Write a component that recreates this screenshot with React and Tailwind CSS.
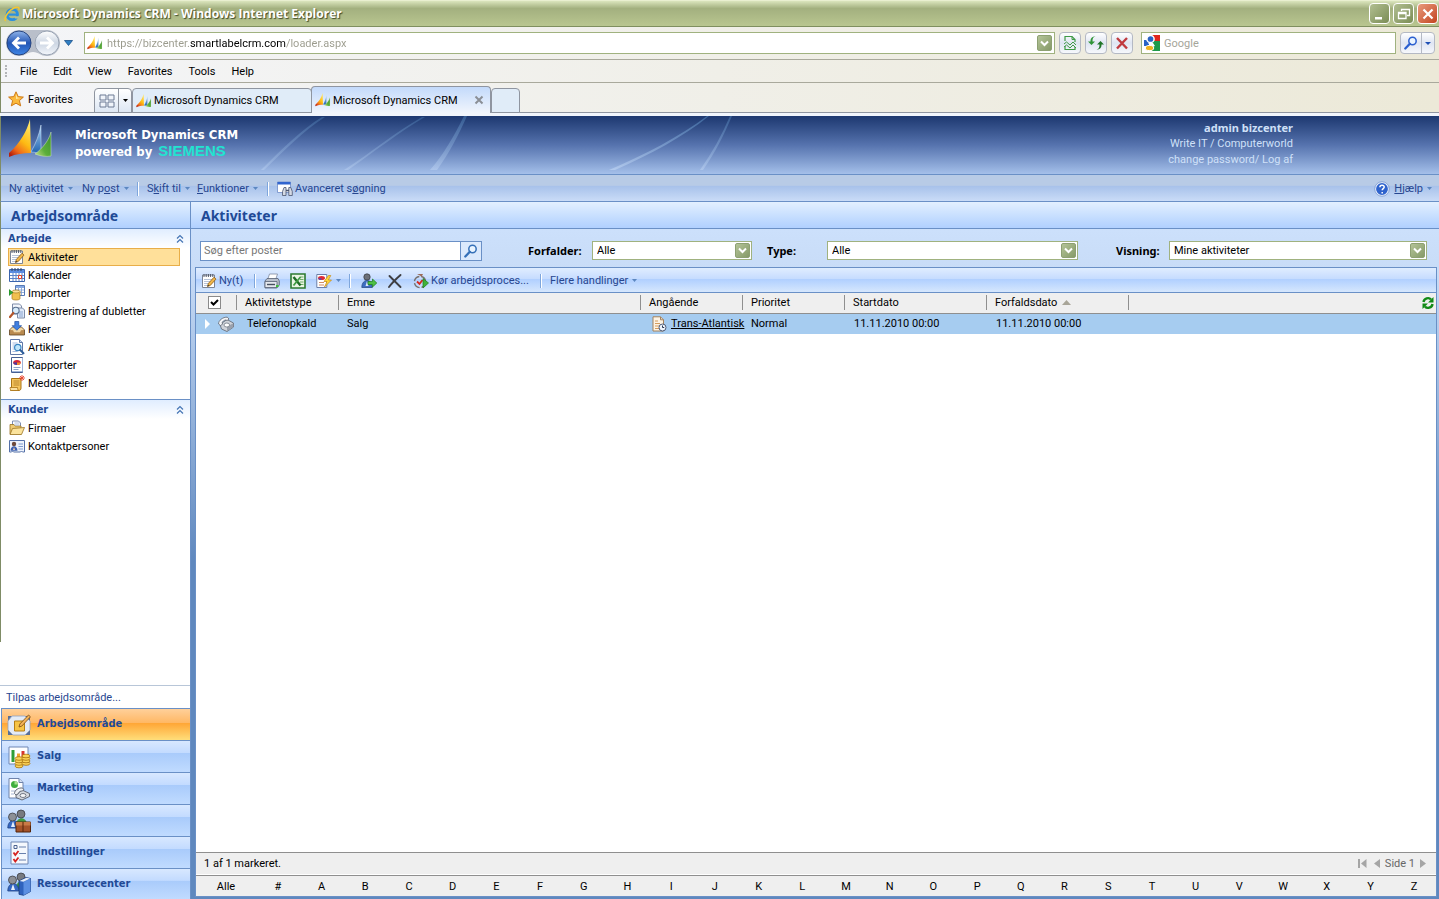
import React, { useState } from 'react';

/* ---------- icons ---------- */

const Svg = ({ size = 'w-4 h-4', box = '0 0 16 16', children }) => (
  <svg className={`${size} shrink-0`} viewBox={box} fill="none" aria-hidden="true">
    {children}
  </svg>
);

const CrmLogo = ({ size }) => (
  <Svg size={size} box="0 0 46 40">
    <defs>
      <linearGradient id="sailYellow" x1="0.7" y1="0" x2="0.2" y2="1">
        <stop offset="0" stopColor="#ffe76a" />
        <stop offset="0.5" stopColor="#fdbb13" />
        <stop offset="0.8" stopColor="#f0691b" />
        <stop offset="1" stopColor="#b5200f" />
      </linearGradient>
      <linearGradient id="sailBlue" x1="0" y1="0" x2="0" y2="1">
        <stop offset="0" stopColor="#a9d2f5" />
        <stop offset="1" stopColor="#1b5fae" />
      </linearGradient>
      <linearGradient id="sailGreen" x1="1" y1="0" x2="0" y2="1">
        <stop offset="0" stopColor="#3d8f2c" />
        <stop offset="0.6" stopColor="#5cae3b" />
        <stop offset="1" stopColor="#c9e08a" />
      </linearGradient>
    </defs>
    <path d="M22 0C19 12 12 24 1 34v4c7-3 14-4 22-4z" fill="url(#sailYellow)" />
    <path d="M33 6c-2 10-5 18-10 27 4 0 7 1 10 2z" fill="url(#sailBlue)" stroke="#d5e8fa" strokeWidth=".5" />
    <path d="M43 13c-2 8-8 16-16 22 5 2 11 3 16 2z" fill="url(#sailGreen)" stroke="#cfe6bd" strokeWidth=".5" />
  </Svg>
);

const IeIcon = () => (
  <Svg>
    <circle cx="8.3" cy="8.5" r="5.2" stroke="#2a8fe0" strokeWidth="2.8" />
    <path d="M4 8.6h10" stroke="#2a8fe0" strokeWidth="2.2" />
    <path d="M10 10.2h5v2.3h-4z" fill="#b3c08c" />
    <path d="M1.6 15C-.6 12.500 4.500 4 11 1.500c3-1 4.600 0 3.800 2.300" stroke="#f6c62c" strokeWidth="1.4" />
  </Svg>
);

const StarIcon = () => (
  <Svg>
    <path d="m8 .8 2.200 4.800 5.200.5-4 3.500 1.300 5.300L8 12.200l-4.700 2.700 1.300-5.300-4-3.500 5.200-.5z" fill="#fbb93c" stroke="#c9720e" strokeWidth=".9" />
    <path d="m8 3 1.400 3.500 3 .4L8 8z" fill="#ffe6a0" />
  </Svg>
);

const NotepadIcon = () => (
  <Svg>
    <path d="M1.500 2h12v12.500h-12z" fill="#fff" stroke="#7b8496" />
    <path d="M3 1v3M5.200 1v3M7.400 1v3M9.600 1v3M11.800 1v3" stroke="#50586a" />
    <path d="M3 6.500h9M3 8.500h9M3 10.500h7M3 12.500h5" stroke="#b7c3d9" />
    <path d="m6.500 13.500.8-3L13 4.200l2 1.900-5.700 6.300z" fill="#f0b649" stroke="#8c5a16" strokeWidth=".8" />
    <path d="m6.500 13.500.5-1.700 1.200 1z" fill="#333" />
  </Svg>
);

const CalendarIcon = () => (
  <Svg>
    <path d="M.5 2.500h15v12H.5z" fill="#fff" stroke="#3a64ad" />
    <path d="M1 3h14v3H1z" fill="#5b8ce0" />
    <path d="M3 1v3M6 1v3M9 1v3M12 1v3" stroke="#36425c" />
    <path d="M1 8.500h14M1 11.500h14M4 6v8M7 6v8M10 6v8M13 6v8" stroke="#5d83c7" />
    <path d="M9.500 8.500h3v3h-3z" fill="#fff" stroke="#e0442a" />
  </Svg>
);

const ImportIcon = () => (
  <Svg>
    <path d="M6.500.5h9v10h-9z" fill="#fff" stroke="#5679b5" />
    <path d="M7 1h8v2H7z" fill="#86a9e4" />
    <path d="M7 5h8M7 7.500h8M9.500 3v7M12.500 3v7" stroke="#7c9cd2" strokeWidth=".8" />
    <path d="M3 6.500v7c0 2 8 2 8 0v-7z" fill="#f1c04f" stroke="#a8781c" strokeWidth=".7" />
    <ellipse cx="7" cy="6.500" rx="4" ry="1.500" fill="#fbe29a" stroke="#a8781c" strokeWidth=".7" />
    <path d="M0 4.500 4 7.500 0 10.500z" fill="#2fa832" stroke="#14751a" strokeWidth=".5" />
  </Svg>
);

const DuplicateIcon = () => (
  <Svg>
    <path d="M3.500 1h7l2 2v8h-9z" fill="#f3f6fc" stroke="#7f8ca8" />
    <path d="M8.500 5h5l2 2v8h-7z" fill="#dfe9f8" stroke="#7f8ca8" />
    <path d="M10 9h4M10 11h4M10 13h4" stroke="#8aa4d0" />
    <circle cx="6.800" cy="7.500" r="3.300" fill="#d8ecfb" stroke="#59708f" strokeWidth="1.100" />
    <path d="M4.300 10 1 14" stroke="#b5562b" strokeWidth="2.200" strokeLinecap="round" />
  </Svg>
);

const QueueIcon = () => (
  <Svg>
    <path d="m.5 9 3-3h9l3 3v5h-15z" fill="#b98a4f" stroke="#5f4422" strokeWidth=".8" />
    <path d="m1 9 2.500-2.500h9L15 9l-3 .3-1 2H5l-1-2z" fill="#f0d7a4" />
    <path d="M5.800.5h4v4.200h2.700L7.800 9.300 3.200 4.700h2.600z" fill="#3f7fe0" stroke="#1c4da0" strokeWidth=".7" />
  </Svg>
);

const ArticleIcon = () => (
  <Svg>
    <path d="M1.500.5h9l3 3v12h-12z" fill="#fff" stroke="#6079a8" />
    <path d="M10.500.5v3h3" fill="#c8d8f1" stroke="#6079a8" />
    <path d="M3.500 4h5M3.500 6h3M3.500 8h2M3.500 10h2M3.500 12.500h5" stroke="#a7bbe0" />
    <circle cx="8.800" cy="8.500" r="3.200" fill="#bfe5fa" stroke="#3b86c4" strokeWidth="1.200" />
    <path d="m11.200 11 3.300 3.300" stroke="#2f5f9c" strokeWidth="2" strokeLinecap="round" />
  </Svg>
);

const ReportIcon = () => (
  <Svg>
    <path d="M2.500.5h11v15h-11z" fill="#fff" stroke="#465f93" />
    <path d="M3 14.500h10.500V1" stroke="#9fb3d8" />
    <ellipse cx="8" cy="5.500" rx="3.800" ry="2.500" fill="#d6233b" />
    <path d="M8 5.500 4.200 5.500C4.300 7 6 8 8 8z" fill="#4d3aa0" />
    <path d="M8 5.500h3.800C11.600 7 10 8 8 8z" fill="#f08f2c" />
    <path d="M4.500 10.500h7M4.500 12.500h5" stroke="#8ea2c8" />
  </Svg>
);

const MessageIcon = () => (
  <Svg>
    <path d="M2.500 3.500h9.500v9.500c0 1.500-.8 2.500-2 2.500H1.500c.8-.6 1-1.500 1-2.500z" fill="#f5c45c" stroke="#aa7415" />
    <path d="M1 12.500h7.500c0 2 .6 2.600 1.500 3H2.500C1.500 15 1 14 1 12.500z" fill="#fbe0a0" stroke="#aa7415" strokeWidth=".8" />
    <path d="M4.500 6h6M4.500 8h6M4.500 10h6" stroke="#b9862c" />
    <path d="M13 0v6M10 3h6M11 1l4 4M15 1l-4 4" stroke="#e8452f" strokeWidth=".9" />
  </Svg>
);

const FolderIcon = () => (
  <Svg>
    <path d="M3.500 1h6l2 2v8h-8z" fill="#fff" stroke="#7c8eb2" />
    <path d="M1 4.500h4l1 1.500h6v8H1z" fill="#f0cb73" stroke="#9a7423" strokeWidth=".8" />
    <path d="M5.500 3h5M5.500 5h5" stroke="#a9badb" />
    <path d="m3.500 8.500 12-1-3 7H1z" fill="#fbe39c" stroke="#9a7423" strokeWidth=".8" />
  </Svg>
);

const ContactIcon = () => (
  <Svg>
    <path d="M.5 2.500h15v11.500h-2l-1-1-1 1h-7l-1-1-1 1h-2z" fill="#eef3fc" stroke="#5470a8" />
    <circle cx="5" cy="6" r="2.200" fill="#6d4a3b" />
    <path d="M1.500 12.800c0-6 7-6 7 0z" fill="#3b5fae" />
    <path d="m5 9-1 3h2z" fill="#f3d0b0" />
    <path d="M9.500 6h4.500M9.500 8.500h4.500M9.500 11h4.500" stroke="#7f9bd0" />
  </Svg>
);

const PhoneIcon = () => (
  <Svg>
    <path d="m2 8.500 7-5 6.500 3.500v4L9 15.500 3.500 13z" fill="#cfd3da" stroke="#5d636e" strokeWidth=".8" />
    <path d="m9 10.500 6.300-3.300v3.700L9 15.300z" fill="#9aa1ad" />
    <ellipse cx="8.800" cy="9" rx="2.800" ry="2" fill="#fff" stroke="#6f7682" strokeWidth=".8" />
    <path d="M.6 8C.3 4.500 5 .9 9.300 1.200l1.700 1.800-1.800 1.400-1.800-.4C5.800 4.400 4.500 5.500 4.200 6.700l.4 1.500-2.200 1.300z" fill="#f4f5f8" stroke="#5d636e" strokeWidth=".8" />
  </Svg>
);

const CaseIcon = () => (
  <Svg>
    <path d="M2 .8h7.500l3 3V15H2z" fill="#fdf3e4" stroke="#a3825d" />
    <path d="M9.500.8v3h3" stroke="#a3825d" />
    <path d="M4 5h3M4 7.500h5M4 10h4M4 12.500h4" stroke="#d49b5c" />
    <circle cx="11.500" cy="11.500" r="3.500" fill="#eef4fc" stroke="#4f5c78" />
    <path d="M11.500 9.500v2h1.700" stroke="#26344f" />
  </Svg>
);

const PrintIcon = () => (
  <Svg>
    <path d="M5.500 1h8l-2 6h-8z" fill="#fff" stroke="#7d89a0" strokeWidth=".8" />
    <path d="m1 8 2-2.500h11L15.300 8v4l-2.500 3H1z" fill="#b9c0cc" stroke="#555f73" strokeWidth=".8" />
    <path d="M1 8.500h12v6H1z" fill="#e4e8ee" stroke="#555f73" strokeWidth=".8" />
    <path d="M3 11.500h8" stroke="#464f60" strokeWidth="1.400" />
    <path d="M12 12h2.500v2H12z" fill="#3fbf3a" />
  </Svg>
);

const ExcelIcon = () => (
  <Svg>
    <path d="M1 1h14v14H1z" fill="#e9f4e4" stroke="#2c7a31" strokeWidth="1.600" />
    <path d="M10 4h3.500M10 6.500h3.500M10 9h3.500M10 11.500h3.500" stroke="#6fae6a" />
    <path d="m3.500 4 7 8.500" stroke="#1e6b25" strokeWidth="2.400" />
    <path d="m10.500 4-7 8.500" stroke="#3f9a42" strokeWidth="1.800" />
  </Svg>
);

const RunReportIcon = () => (
  <Svg>
    <path d="M.8 1.500h10v13H.8z" fill="#fff" stroke="#6b7fa9" />
    <ellipse cx="5.500" cy="5" rx="3.500" ry="2" fill="#e02b35" />
    <path d="M2 5.200c.3 1.500 2 2 3.500 1.900V5z" fill="#6646a5" />
    <path d="M3 9.500h5M3 12h5" stroke="#d18c64" />
    <path d="M12.500 2.500 8 8.500h3L8.500 14 15.500 7h-3.200l2.500-4.500z" fill="#ffd83b" stroke="#c98a12" strokeWidth=".7" />
  </Svg>
);

const AssignIcon = () => (
  <Svg>
    <circle cx="6" cy="4" r="3.200" fill="#6c7078" stroke="#33363c" strokeWidth=".7" />
    <path d="M.8 14.500c0-9.500 10.500-9.500 10.500 0z" fill="#3d6dc0" stroke="#24427d" strokeWidth=".7" />
    <path d="m6 8-1.500 5h3z" fill="#dbe6f7" />
    <path d="M7 8.500h4.500V6l4.300 4-4.300 4v-2.500H7z" fill="#4dc144" stroke="#1d7d1b" strokeWidth=".7" />
  </Svg>
);

const DeleteIcon = () => (
  <Svg>
    <path d="m2.500 3 11 11M13.500 2C9 6 5 10 2 14" stroke="#3e3e42" strokeWidth="1.900" strokeLinecap="round" />
  </Svg>
);

const WorkflowIcon = () => (
  <Svg>
    <circle cx="7" cy="9" r="5.600" stroke="#77706d" strokeWidth="1.400" strokeDasharray="7 2" />
    <path d="M4 1h6L8.500 4 7 2.500z" fill="#9b6b58" />
    <path d="m4 8.500 2.500 2.500L9.500 7" stroke="#d8281f" strokeWidth="1.800" />
    <path d="M10 5.500 15.500 10 10 15z" fill="#40b23a" stroke="#1c7a1b" strokeWidth=".7" />
  </Svg>
);

const FindIcon = () => (
  <Svg>
    <path d="M.5 1h13v10.500H.5z" fill="#fff" stroke="#6f8cc8" strokeWidth=".8" />
    <path d="M.5 1h13v2.500H.5z" fill="#3165cf" />
    <path d="M5.500 14.500v-4l1.500-4h2v8zM15.300 14.500v-4l-1.500-4h-2v8z" fill="#d5dae4" stroke="#4b5670" strokeWidth=".8" />
    <path d="M9 9.500h3" stroke="#4b5670" strokeWidth="1.500" />
  </Svg>
);

const HelpIcon = () => (
  <Svg>
    <circle cx="8" cy="8" r="6.500" fill="#2f63cd" stroke="#e8effb" strokeWidth="1.200" />
    <circle cx="8" cy="8" r="7.300" stroke="#6f8fc9" strokeWidth=".6" />
    <path d="M5.900 6.300c0-2.800 4.300-2.700 4.300-.2 0 1.500-2 1.600-2 3.200M8.200 11v1.500" stroke="#fff" strokeWidth="1.500" />
  </Svg>
);

const Magnifier = ({ color }) => (
  <Svg size="w-3.5 h-3.5" box="0 0 14 14">
    <circle cx="8.500" cy="5" r="3.700" fill="#e9f4ff" stroke={color} strokeWidth="1.500" />
    <path d="m5.800 7.800-4.500 4.700" stroke={color} strokeWidth="2.300" strokeLinecap="round" />
  </Svg>
);

const WorkplaceNavIcon = () => (
  <Svg size="w-6 h-6" box="0 0 24 24">
    <path d="M1 3h22v19H1z" fill="#5a6f96" />
    <path d="M5 3h13l5 5v9l-5 5H6l-5-5V8z" fill="#e4ebf6" stroke="#8fa1c2" strokeWidth=".8" />
    <path d="M7.500 8h10v10h-10z" fill="#f7c445" stroke="#b67f14" />
    <path d="m12 14 .8-3L21.500 2l2 1.800-8.700 9.300z" fill="#f3b357" stroke="#7a4a14" strokeWidth=".8" />
  </Svg>
);

const SalesNavIcon = () => (
  <Svg size="w-6 h-6" box="0 0 24 24">
    <path d="M2 2h19v17H2z" fill="#fff" stroke="#6f87b4" />
    <path d="M4.500 5h3v12h-3z" fill="#2f9e37" />
    <path d="M10 8.500h3V17h-3z" fill="#f1a52e" />
    <path d="M14.500 6h3v11h-3z" fill="#d8362f" />
    {[21, 18.5, 16, 13.5].map((y) => (
      <ellipse key={y} cx="12" cy={y} rx="4" ry="1.800" fill="#fbd45a" stroke="#a8720d" strokeWidth=".8" />
    ))}
    {[18.5, 16, 13.5, 11].map((y) => (
      <ellipse key={y} cx="19" cy={y} rx="4" ry="1.800" fill="#fbd45a" stroke="#a8720d" strokeWidth=".8" />
    ))}
  </Svg>
);

const MarketingNavIcon = () => (
  <Svg size="w-6 h-6" box="0 0 24 24">
    <path d="M2 1.500h10l4 4V21H2z" fill="#fff" stroke="#6f83ab" />
    <path d="M12 1.500v4h4" fill="#d5e0f2" stroke="#6f83ab" />
    <circle cx="7.500" cy="7.500" r="3.500" fill="#3fae3c" />
    <path d="M7.500 7.500V4A3.500 3.500 0 0 1 11 7.500z" fill="#a6de8f" />
    <path d="M4 14h4M4 17h3" stroke="#a8b7d3" />
    <path d="m9 18 6-5 7.500 3.500v3L15 23l-6-2.500z" fill="#d3d7de" stroke="#59606d" strokeWidth=".9" />
    <ellipse cx="16" cy="18.500" rx="3" ry="2" fill="#f5f6f8" stroke="#59606d" strokeWidth=".8" />
    <path d="M7.500 16.500c0-3.500 4-6 8-5.500l1.500 1.800-1.800 1.200c-2 0-3.500.8-4.200 3l-2 1z" fill="#eef0f3" stroke="#59606d" strokeWidth=".9" />
  </Svg>
);

const People = () => (
  <>
    <path d="M9 16c0-9 11-9 11 0z" fill="#3f9a44" />
    <circle cx="14" cy="5" r="4" fill="#777a80" stroke="#3d3f45" strokeWidth=".8" />
    <path d="M.8 19c0-10 11-10 11 0z" fill="#3568c4" stroke="#1e4080" strokeWidth=".8" />
    <path d="m6 12-2 6h4z" fill="#e6eefb" />
    <circle cx="5.500" cy="8" r="4" fill="#8d9096" stroke="#3d3f45" strokeWidth=".8" />
  </>
);

const ServiceNavIcon = () => (
  <Svg size="w-6 h-6" box="0 0 24 24">
    <People />
    <path d="M9 13h14.500v10H9z" fill="#a4532a" stroke="#552409" />
    <path d="M9 13h14.500v3.500H9z" fill="#c97b46" />
    <path d="M16 13v10" stroke="#552409" />
  </Svg>
);

const SettingsNavIcon = () => (
  <Svg size="w-6 h-6" box="0 0 24 24">
    <path d="M4 1h17v22H4z" fill="#f5f8fd" stroke="#7187b3" />
    <path d="M7 4.500h3v3H7z" stroke="#4d6391" />
    <path d="M12 6h7M12 12.500h7M12 19h7" stroke="#6980ad" strokeWidth="1.200" />
    <path d="m6.500 11.500 1.800 2.500 3.200-4M6.500 18l1.800 2.500 3.200-4" stroke="#d4211f" strokeWidth="1.800" />
  </Svg>
);

const ResourceNavIcon = () => (
  <Svg size="w-6 h-6" box="0 0 24 24">
    <People />
    <path d="m12 9 7-3.500 4.500 1v13l-7 3.800-4.500-1z" fill="#2f62bd" stroke="#173a7c" strokeWidth=".8" />
    <path d="m16.500 10 7-3.500v13l-7 3.800z" fill="#5b8fe2" />
    <path d="m12.500 9 7-3.200 3.600.8-6.600 3.200z" fill="#e5edfa" />
  </Svg>
);

/* ---------- small shared parts ---------- */

const Caret = () => (
  <svg className="w-[5px] h-[3px] shrink-0 ml-1" viewBox="0 0 5 3" aria-hidden="true">
    <path d="M0 0h5L2.500 3z" fill="#5c87c0" />
  </svg>
);

const Divider = () => <span className="w-[2px] h-3.5 bg-[#7ea6dc] border-r border-white" />;

const Collapse = () => (
  <svg className="w-2 h-2.5" viewBox="0 0 8 10" fill="none" aria-hidden="true">
    <path d="M1 4.500 4 1.500l3 3M1 8.500 4 5.500l3 3" stroke="#4474b4" strokeWidth="1.200" />
  </svg>
);

const GreenArrow = () => (
  <span className="absolute right-[2px] top-[2px] bottom-[2px] w-[15px] rounded-xs bg-linear-to-br from-[#b4c498] to-[#869a68] border border-[#8da072] flex items-center justify-center pointer-events-none">
    <svg className="w-[9px] h-[7px]" viewBox="0 0 9 7" fill="none" aria-hidden="true">
      <path d="m1 1.500 3.500 3.500L8 1.500" stroke="#fff" strokeWidth="2" />
    </svg>
  </span>
);

const FilterSelect = ({ id, label, labelClass, selectClass, option }) => (
  <>
    <label htmlFor={id} className={`font-bold leading-4 [font-family:'Noto_Sans',sans-serif] ${labelClass}`}>{label}</label>
    <div className={`relative ${selectClass}`}>
      <select id={id} className="block appearance-none w-full h-[19px] pl-1 bg-white border border-[#a0b27f] leading-[17px] outline-none">
        <option>{option}</option>
      </select>
      <GreenArrow />
    </div>
  </>
);

const ToolButton = ({ icon, children, caret, className = '', ...rest }) => (
  <button className={`flex items-center whitespace-nowrap ${className}`} {...rest}>
    {icon}
    {children && <span className={icon ? 'ml-[2px]' : ''}>{children}</span>}
    {caret && <Caret />}
  </button>
);

/* ---------- browser chrome ---------- */

const TitleBar = () => (
  <div className="h-[27px] flex items-center pl-1 pr-px bg-linear-to-b from-[#dbe5bd] via-[#a3b07f] via-30% to-[#b9c690] border-t border-[#e9efd0] border-b border-b-[#7f8f5f]">
    <IeIcon />
    <h1 className="ml-[2px] text-white text-[12px] font-bold [text-shadow:1px_1px_1px_#3f4a28] [font-family:'Open_Sans',sans-serif]">
      Microsoft Dynamics CRM - Windows Internet Explorer
    </h1>
    <div className="ml-auto flex gap-[3px]">
      <button aria-label="Minimize" className="w-[21px] h-[21px] rounded-sm border border-white bg-linear-to-br from-[#b2bf92] to-[#7b8d55] flex items-center justify-center">
        <Svg><path d="M3 11h7v2.500H3z" fill="#fff" /></Svg>
      </button>
      <button aria-label="Restore" className="w-[21px] h-[21px] rounded-sm border border-white bg-linear-to-br from-[#b2bf92] to-[#7b8d55] flex items-center justify-center">
        <Svg><path d="M5.500 5V3.500h8v6H11M2.500 6.500h7.500v6H2.500zM2.500 7.500H10" stroke="#fff" strokeWidth="1.300" /></Svg>
      </button>
      <button aria-label="Close" className="w-[21px] h-[21px] rounded-sm border border-white bg-linear-to-br from-[#e79a7c] to-[#c2421b] flex items-center justify-center">
        <Svg><path d="m3.500 3.500 9 9M12.500 3.500l-9 9" stroke="#fff" strokeWidth="2.200" /></Svg>
      </button>
    </div>
  </div>
);

const chromeButton =
  'w-[22px] h-[22px] rounded-sm border border-[#b4b9c4] bg-linear-to-b from-white via-[#dfe5f2] to-[#f6f8fc] flex items-center justify-center';

const AddressRow = () => (
  <div className="h-8 flex items-center pl-1 pr-1">
    <svg className="w-[58px] h-7 shrink-0" viewBox="0 0 58 28" aria-hidden="true">
      <defs>
        <linearGradient id="back" x1="0" y1="0" x2="0" y2="1">
          <stop offset="0" stopColor="#8fb4ea" />
          <stop offset="0.5" stopColor="#2456b4" />
          <stop offset="1" stopColor="#3f86e6" />
        </linearGradient>
        <linearGradient id="fwd" x1="0" y1="0" x2="0" y2="1">
          <stop offset="0" stopColor="#fff" />
          <stop offset="0.5" stopColor="#cdd6e3" />
          <stop offset="1" stopColor="#f3f6fb" />
        </linearGradient>
      </defs>
      <path d="M14 1h28a13 13 0 0 1 0 26c-7 0-8-4-14-4s-7 4-14 4a13 13 0 0 1 0-26z" fill="#b9bfca" />
      <circle cx="14" cy="14" r="12" fill="url(#back)" stroke="#27457f" />
      <circle cx="42" cy="14" r="12" fill="url(#fwd)" stroke="#9aa4b4" />
      <path d="M21 14H9M14 8.500 8.500 14l5.500 5.500" fill="none" stroke="#fff" strokeWidth="2.800" />
      <path d="M35 14h12M42 8.500l5.500 5.500-5.500 5.500" fill="none" stroke="#fff" strokeWidth="2.800" />
    </svg>
    <svg className="w-[9px] h-[6px] mx-px shrink-0" viewBox="0 0 9 6" aria-hidden="true">
      <path d="M.5.5h8L4.500 5.500z" fill="#2f7fc4" stroke="#174f8c" strokeWidth=".8" />
    </svg>
    <div className="relative flex-1 ml-2.5 h-[22px] flex items-center bg-white border border-[#a0b27f] pl-[2px] pr-5">
      <CrmLogo size="w-4 h-3.5" />
      <input
        aria-label="Address"
        defaultValue="https://bizcenter.smartlabelcrm.com/loader.aspx"
        className="flex-1 ml-1 outline-none text-transparent bg-clip-text bg-[linear-gradient(90deg,#9a9a8c_83px,#000_83px,#000_179px,#9a9a8c_179px)]"
      />
      <GreenArrow />
    </div>
    <div className="flex gap-1 ml-1">
      <button aria-label="Compatibility view" className={chromeButton}>
        <Svg>
          <path d="M3 6V1.500h7l3 3V7M3 11v3.500h10V12" stroke="#3f9a46" strokeWidth="1.200" />
          <path d="M10 1.500v3h3" stroke="#3f9a46" />
          <path d="m2 9 2.500-2L8 10l3-3 3 3M2 12l2.500-2L8 13l3-3 3 3" stroke="#3f9a46" />
        </Svg>
      </button>
      <button aria-label="Refresh" className={chromeButton}>
        <Svg>
          <path d="M7.500 1.500C5 2 4.500 3.500 4.500 6.500H7L3.500 10 0 6.500h2.500C2.500 3 4 1.500 7.500 1.500z" fill="#2f9437" />
          <path d="M8.500 14.500c2.500-.5 3-2 3-5H9L12.500 6 16 9.500h-2.500c0 3.500-1.500 5-5 5z" fill="#1f7527" />
        </Svg>
      </button>
      <button aria-label="Stop" className={chromeButton}>
        <Svg><path d="m3 3 10 10.500M13 3 3 13.500" stroke="#c03a3f" strokeWidth="2.400" /></Svg>
      </button>
    </div>
    <div className="w-[255px] ml-2 h-[22px] flex items-center bg-white border border-[#a0b27f] pl-[2px]">
      <Svg>
        <path d="M8 0h8v8H8z" fill="#e1261c" />
        <path d="M8 6h8v10H8z" fill="#1f9a4a" />
        <path d="M0 5h5v6H0z" fill="#2a62c4" />
        <circle cx="6.500" cy="4" r="3.600" fill="#2a62c4" stroke="#fff" strokeWidth="1.500" />
        <path d="M4 8h5l2 3-3 1z" fill="#fff" />
        <ellipse cx="5.500" cy="13" rx="4.200" ry="2.600" fill="#f3b31f" stroke="#fff" />
      </Svg>
      <input aria-label="Search Google" placeholder="Google" className="flex-1 ml-1 outline-none placeholder:text-[#a5a59a]" />
    </div>
    <div className="flex ml-1 rounded-sm border border-[#b4b9c4] bg-linear-to-b from-white via-[#dfe5f2] to-[#f6f8fc]">
      <button aria-label="Search" className="w-5 h-5 flex items-center justify-center"><Magnifier color="#2a5fd0" /></button>
      <button aria-label="Search options" className="w-[13px] h-5 border-l border-[#b4b9c4] flex items-center justify-center">
        <svg className="w-[6px] h-[3px]" viewBox="0 0 6 3" aria-hidden="true"><path d="M0 0h6L3 3z" fill="#1d4fb5" /></svg>
      </button>
    </div>
  </div>
);

const MenuRow = () => (
  <nav className="h-6 flex items-center gap-4 pl-1 border-t border-[#a9a99c] border-b border-b-[#a9a99c]">
    <span className="-mr-[3px] h-3 border-l-2 border-dotted border-[#b3b5b8]" />
    <a href="#file">File</a>
    <a href="#edit">Edit</a>
    <a href="#view">View</a>
    <a href="#favorites">Favorites</a>
    <a href="#tools">Tools</a>
    <a href="#help">Help</a>
  </nav>
);

const TabRow = () => (
  <div className="h-[30px] flex items-end bg-[linear-gradient(#8f95a0,#8f95a0)] bg-[length:100%_1px] bg-bottom bg-no-repeat">
    <button className="flex items-center gap-1 pl-[7px] h-[28px] w-[93px]">
      <StarIcon />
      Favorites
    </button>
    <div className="flex h-[25px] w-[38px] rounded-t-sm border border-[#8f95a0] bg-linear-to-b from-white to-[#dde7f4]">
      <button aria-label="Quick tabs" className="flex-1 flex items-center justify-center border-r border-[#8f95a0]">
        <Svg><path d="M1 2h6v5H1zM9 2h6v5H9zM1 9h6v5H1zM9 9h6v5H9z" stroke="#6d7a94" fill="#f0f4fa" /></Svg>
      </button>
      <button aria-label="Tab list" className="w-3 flex items-center justify-center">
        <svg className="w-[5px] h-[3px]" viewBox="0 0 5 3" aria-hidden="true"><path d="M0 0h5L2.500 3z" fill="#000" /></svg>
      </button>
    </div>
    <button className="h-[25px] w-[180px] flex items-center gap-[2px] pl-[3px] rounded-t-sm border border-[#8f95a0] bg-[#e0ecf8] whitespace-nowrap">
      <CrmLogo size="w-4 h-3.5" />
      Microsoft Dynamics CRM
    </button>
    <div className="-ml-px h-[27px] w-[180px] flex items-center rounded-t-sm border border-b-0 border-[#8f95a0] bg-linear-to-b from-[#c3dafb] to-[#f1f5fc] pl-[3px] pr-1.5">
      <button className="flex items-center gap-[2px] whitespace-nowrap">
        <CrmLogo size="w-4 h-3.5" />
        Microsoft Dynamics CRM
      </button>
      <button aria-label="Close tab" className="ml-auto">
        <svg className="w-2.5 h-2.5" viewBox="0 0 10 10" aria-hidden="true"><path d="m1.500 1.500 7 7M8.500 1.500l-7 7" stroke="#8b8f96" strokeWidth="2" /></svg>
      </button>
    </div>
    <button aria-label="New tab" className="h-[25px] w-[29px] rounded-t-sm border border-[#8f95a0] bg-[#e0ecf8]" />
  </div>
);

/* ---------- CRM header ---------- */

const Header = () => (
  <header className="relative h-[59px] flex items-start pl-[7px] pr-[146px] bg-linear-to-b from-[#1d3870] via-[#5673ae] via-50% to-[#a5c0ea] border-b border-[#6a90c6] border-l border-l-[#7f8c66]">
    <svg className="absolute left-0 top-0 w-[735px] h-[54px]" viewBox="0 0 735 54" fill="none" aria-hidden="true">
      <defs>
        <linearGradient id="ray" x1="0" y1="0" x2="0" y2="1">
          <stop offset="0" stopColor="#5f9bd0" stopOpacity=".5" />
          <stop offset="1" stopColor="#d6e8ff" stopOpacity=".45" />
        </linearGradient>
      </defs>
      <path d="M321 1C300 14 282 32 260 54h3C285 33 302 15 324 1z" fill="url(#ray)" opacity=".6" />
      <path d="M421 1c-28 16-50 35-78 53h4c27-19 50-37 77-53z" fill="url(#ray)" opacity=".6" />
      <path d="M463 0C453 20 443 38 429 54h7c13-18 22-36 30-54z" fill="url(#ray)" opacity=".7" />
      <path d="M706 0C678 21 645 38 608 54h6c36-16 68-33 94-54z" fill="url(#ray)" opacity=".9" />
      <path d="M729 0c-8 19-18 37-30 54h3c12-17 21-35 29-54z" fill="url(#ray)" opacity=".7" />
    </svg>
    <div className="relative mt-[3px]"><CrmLogo size="w-[46px] h-10" /></div>
    <div className="relative ml-[21px] mt-[11px] text-white font-bold text-[13px] leading-4 [font-family:'DejaVu_Sans_Condensed','DejaVu_Sans',sans-serif]">
      <p>Microsoft Dynamics CRM</p>
      <p>
        powered by <span className="ml-[2px] text-[#22e3d0] text-[15px] [font-family:'Liberation_Sans',sans-serif]">SIEMENS</span>
      </p>
    </div>
    <div className="relative ml-auto mt-1 text-right leading-4 text-[#cfe0f8]">
      <p className="font-bold [font-family:'Noto_Sans',sans-serif]">admin bizcenter</p>
      <p>Write IT / Computerworld</p>
      <p><a href="#password">change password</a>/ <a href="#logout">Log af</a></p>
    </div>
  </header>
);

const Toolbar = () => (
  <div className="h-[27px] flex items-center pt-px pl-2 pr-[7px] text-[#27468f] bg-[linear-gradient(#b8cbe6_40%,#a7c1ea_42%,#cadcf7)] border-b border-[#6a90c6] border-l border-l-[#7f8c66]">
    <ToolButton caret className="w-[73px]">Ny ak<u>t</u>ivitet</ToolButton>
    <ToolButton caret className="w-[55px]">Ny p<u>o</u>st</ToolButton>
    <Divider />
    <ToolButton caret className="ml-2 w-[50px]">S<u>k</u>ift til</ToolButton>
    <ToolButton caret className="w-[70px]"><u>F</u>unktioner</ToolButton>
    <Divider />
    <ToolButton icon={<FindIcon />} className="ml-2">Avanceret s<u>ø</u>gning</ToolButton>
    <ToolButton icon={<HelpIcon />} caret className="ml-auto"><span className="ml-[2px]"><u>H</u>jælp</span></ToolButton>
  </div>
);

/* ---------- left navigation ---------- */

const workItems = [
  { name: 'Aktiviteter', icon: <NotepadIcon /> },
  { name: 'Kalender', icon: <CalendarIcon /> },
  { name: 'Importer', icon: <ImportIcon /> },
  { name: 'Registrering af dubletter', icon: <DuplicateIcon /> },
  { name: 'Køer', icon: <QueueIcon /> },
  { name: 'Artikler', icon: <ArticleIcon /> },
  { name: 'Rapporter', icon: <ReportIcon /> },
  { name: 'Meddelelser', icon: <MessageIcon /> },
];

const customerItems = [
  { name: 'Firmaer', icon: <FolderIcon /> },
  { name: 'Kontaktpersoner', icon: <ContactIcon /> },
];

const areas = [
  { name: 'Arbejdsområde', icon: <WorkplaceNavIcon /> },
  { name: 'Salg', icon: <SalesNavIcon /> },
  { name: 'Marketing', icon: <MarketingNavIcon /> },
  { name: 'Service', icon: <ServiceNavIcon /> },
  { name: 'Indstillinger', icon: <SettingsNavIcon /> },
  { name: 'Ressourcecenter', icon: <ResourceNavIcon /> },
];

const NavSection = ({ title, items, current, onSelect }) => (
  <section className="pb-[7px]">
    <button className="w-full h-[19px] flex items-center justify-between pl-[7px] pr-1.5 font-bold leading-4 text-[#1f4a96] bg-linear-to-b from-[#e0edff] to-white [font-family:'DejaVu_Sans_Condensed','DejaVu_Sans',sans-serif]">
      {title}
      <Collapse />
    </button>
    <ul className="pl-[7px] pr-[10px]">
      {items.map((item) => (
        <li key={item.name}>
          <a
            href={`#${item.name}`}
            onClick={() => onSelect(item.name)}
            className={`h-[18px] flex items-center gap-[3px] border whitespace-nowrap ${
              current === item.name ? 'bg-[#ffe09a] border-[#e8ae49]' : 'border-transparent'
            }`}
          >
            {item.icon}
            {item.name}
          </a>
        </li>
      ))}
    </ul>
  </section>
);

const Sidebar = () => {
  const [current, setCurrent] = useState('Aktiviteter');
  const [area, setArea] = useState('Arbejdsområde');

  return (
    <aside className="w-[191px] shrink-0 flex flex-col bg-white border-r border-[#6a90c6]">
      <div className="flex-1 border-l border-[#7f8c66]">
        <h2 className="h-[27px] flex items-center pl-[10px] text-[14px] font-bold text-[#1f4a96] bg-linear-to-b from-[#e3f0ff] to-[#b0d0ff] border-b border-[#6a90c6] [font-family:'Noto_Sans',sans-serif]">
          Arbejdsområde
        </h2>
        <NavSection title="Arbejde" items={workItems} current={current} onSelect={setCurrent} />
        <div className="border-t border-[#6a90c6]">
          <NavSection title="Kunder" items={customerItems} current={current} onSelect={setCurrent} />
        </div>
      </div>
      <div className="h-11 border-b border-[#b8c6d8]" />
      <a href="#tilpas" className="h-[22px] flex items-center pl-1.5 text-[#27468f]">Tilpas arbejdsområde...</a>
      <nav className="pl-px [font-family:'DejaVu_Sans_Condensed','DejaVu_Sans',sans-serif]">
        {areas.map((item) => (
          <button
            key={item.name}
            onClick={() => setArea(item.name)}
            className={`w-full h-8 last:h-[31px] flex items-center gap-1.5 pl-[5px] border-t border-l border-[#6a90c6] font-bold text-[#1f4a96] ${
              area === item.name
                ? 'bg-[linear-gradient(#ffd09a,#ffb865_44%,#ffa636_46%,#ffde7a)]'
                : 'bg-[linear-gradient(#d8e8ff,#c3dbff_38%,#a9cbfb_40%,#c0dbff)]'
            }`}
          >
            {item.icon}
            <span className="pb-[2px]">{item.name}</span>
          </button>
        ))}
      </nav>
    </aside>
  );
};

/* ---------- activity list ---------- */

const columns = [
  { name: 'Aktivitetstype', width: 'w-[102px]' },
  { name: 'Emne', width: 'w-[302px]' },
  { name: 'Angående', width: 'w-[102px]' },
  { name: 'Prioritet', width: 'w-[102px]' },
  { name: 'Startdato', width: 'w-[142px]' },
  { name: 'Forfaldsdato', width: 'w-[142px]', sorted: true },
];

const letters = ['#', ...'ABCDEFGHIJKLMNOPQRSTUVWXYZ'];

const Filters = () => (
  <div className="h-[38px] flex items-center pt-[5px] pl-[9px] pr-[12px]">
    <div className="w-[282px] h-5 flex bg-white border border-[#6a90c6]">
      <input aria-label="Søg efter poster" placeholder="Søg efter poster" className="flex-1 pl-[3px] outline-none placeholder:text-[#777]" />
      <button aria-label="Søg" className="w-[21px] flex items-center justify-center border-l border-[#6a90c6] bg-[#dbe9fc]">
        <Magnifier color="#3570b8" />
      </button>
    </div>
    <FilterSelect id="due" label="Forfalder:" labelClass="ml-[46px] w-[64px]" selectClass="w-[160px]" option="Alle" />
    <FilterSelect id="type" label="Type:" labelClass="ml-[15px] w-[60px]" selectClass="w-[251px]" option="Alle" />
    <FilterSelect id="view" label="Visning:" labelClass="ml-auto w-[53px]" selectClass="w-[258px]" option="Mine aktiviteter" />
  </div>
);

const GridToolbar = () => (
  <div className="h-[25px] flex items-center pt-px pl-[5px] text-[#27468f] bg-[linear-gradient(#e0edff,#c6dcff_45%,#b1d0ff_48%,#d6e7fd)] border-b border-[#6a90c6]">
    <ToolButton icon={<NotepadIcon />} className="w-[53px]">Ny(t)</ToolButton>
    <Divider />
    <ToolButton icon={<PrintIcon />} aria-label="Udskriv" className="ml-2" />
    <ToolButton icon={<ExcelIcon />} aria-label="Eksporter til Excel" className="ml-2.5" />
    <ToolButton icon={<RunReportIcon />} aria-label="Rapporter" caret className="ml-2.5 w-[33px]" />
    <Divider />
    <ToolButton icon={<AssignIcon />} aria-label="Tildel" className="ml-2.5" />
    <ToolButton icon={<DeleteIcon />} aria-label="Slet" className="ml-2.5" />
    <ToolButton icon={<WorkflowIcon />} className="ml-2.5 w-[127px]">Kør arbejdsproces...</ToolButton>
    <Divider />
    <ToolButton caret className="ml-2">Flere handlinger</ToolButton>
  </div>
);

const ActivityTable = () => (
  <table className="w-full table-fixed text-left">
    <thead>
      <tr className="h-5 bg-[#efefef] border-b border-[#8f8f8f]">
        <th className="w-[40px] pl-3">
          <label className="relative block w-[13px] h-[13px]">
            <input type="checkbox" defaultChecked aria-label="Marker alle" className="peer appearance-none block w-[13px] h-[13px] bg-white border border-[#8a8a8a]" />
            <svg className="absolute left-[2px] top-[2px] w-[9px] h-[9px] hidden peer-checked:block" viewBox="0 0 9 9" fill="none" aria-hidden="true">
              <path d="m1 4 2.500 2.500L8 2" stroke="#000" strokeWidth="2" />
            </svg>
          </label>
        </th>
        {columns.map((col) => (
          <th key={col.name} className={`${col.width} font-normal`}>
            <span className="flex items-center h-[15px] pl-2 border-l border-[#8f8f8f]">
              {col.name}
              {col.sorted && (
                <svg className="w-[9px] h-[5px] ml-[5px]" viewBox="0 0 9 5" aria-hidden="true"><path d="M4.500 0 9 5H0z" fill="#a8a598" /></svg>
              )}
            </span>
          </th>
        ))}
        <th>
          <span className="flex items-center justify-end h-[15px] pr-[2px] border-l border-[#8f8f8f]">
            <button aria-label="Opdater">
              <svg className="w-3 h-3.5" viewBox="0 0 12 14" fill="none" aria-hidden="true">
                <path d="M1.500 6C2 2 7 1 9 3.500" stroke="#128a16" strokeWidth="2.400" />
                <path d="M11.500 1v5.500H6z" fill="#128a16" />
                <path d="M10.500 8c-.5 4-5.500 5-7.500 2.500" stroke="#128a16" strokeWidth="2.400" />
                <path d="M.5 13V7.500H6z" fill="#128a16" />
              </svg>
            </button>
          </span>
        </th>
      </tr>
    </thead>
    <tbody>
      <tr className="h-[21px] bg-[#a6ccf0]">
        <td className="pl-[9px]">
          <span className="flex items-center gap-2">
            <svg className="w-[5px] h-2.5 shrink-0" viewBox="0 0 5 10" aria-hidden="true"><path d="M0 0v10l5-5z" fill="#fff" /></svg>
            <PhoneIcon />
          </span>
        </td>
        <td className="pl-[11px]">Telefonopkald</td>
        <td className="pl-[9px]">Salg</td>
        <td className="pl-[11px]">
          <span className="flex items-center gap-1">
            <CaseIcon />
            <a href="#sag" className="underline whitespace-nowrap">Trans-Atlantisk</a>
          </span>
        </td>
        <td className="pl-[9px]">Normal</td>
        <td className="pl-[10px]">11.11.2010 00:00</td>
        <td className="pl-[10px]">11.11.2010 00:00</td>
        <td />
      </tr>
    </tbody>
  </table>
);

const GridFooter = () => (
  <footer className="bg-[#efefef]">
    <div className="h-[23px] flex items-center pl-2 pr-2.5 border-t border-[#8f8f8f] border-b border-b-white">
      <span>1 af 1 markeret.</span>
      <div className="ml-auto flex items-center text-[#666]">
        <button aria-label="Første side">
          <svg className="w-[9px] h-[9px]" viewBox="0 0 9 9" aria-hidden="true"><path d="M0 0h2v9H0zM8.500 0v9L3 4.500z" fill="#a5a5a5" /></svg>
        </button>
        <button aria-label="Forrige side" className="ml-[7px]">
          <svg className="w-[6px] h-[9px]" viewBox="0 0 6 9" aria-hidden="true"><path d="M6 0v9L0 4.500z" fill="#a5a5a5" /></svg>
        </button>
        <span className="mx-[5px]">Side 1</span>
        <button aria-label="Næste side">
          <svg className="w-[6px] h-[9px]" viewBox="0 0 6 9" aria-hidden="true"><path d="M0 0v9l6-4.500z" fill="#a5a5a5" /></svg>
        </button>
      </div>
    </div>
    <div className="h-[21px] flex items-center border-t border-[#8f8f8f] text-center">
      <a href="#alle" className="w-[60px]">Alle</a>
      {letters.map((letter) => (
        <a key={letter} href={`#${letter}`} className="flex-1">{letter}</a>
      ))}
    </div>
  </footer>
);

const App = () => (
  <div className="min-h-screen flex flex-col bg-white text-black text-[11px] leading-[17px] [font-family:Roboto,'Noto_Sans',sans-serif]">
    <TitleBar />
    <div className="border-l border-[#7f8c66] bg-linear-to-r from-[#f4f5f8] to-[#ece9d8]">
      <AddressRow />
      <MenuRow />
      <TabRow />
    </div>
    <div className="h-[3px] bg-[#f1f5fc]" />
    <Header />
    <Toolbar />
    <div className="flex-1 flex">
      <Sidebar />
      <main className="flex-1 min-w-0 flex flex-col bg-[linear-gradient(#cce0fb_27px,#c8dcf7_70px,#5f88be_360px)]">
        <h2 className="h-[27px] flex items-center pl-[10px] text-[14px] font-bold text-[#1f4a96] bg-linear-to-b from-[#e3f0ff] to-[#b0d0ff] border-b border-[#6a90c6] [font-family:'Noto_Sans',sans-serif]">
          Aktiviteter
        </h2>
        <Filters />
        <div className="flex-1 flex flex-col ml-1 mr-[2px] mb-[2px] bg-white border border-[#6a90c6]">
          <GridToolbar />
          <div className="flex-1"><ActivityTable /></div>
          <GridFooter />
        </div>
      </main>
    </div>
  </div>
);

export default App;
